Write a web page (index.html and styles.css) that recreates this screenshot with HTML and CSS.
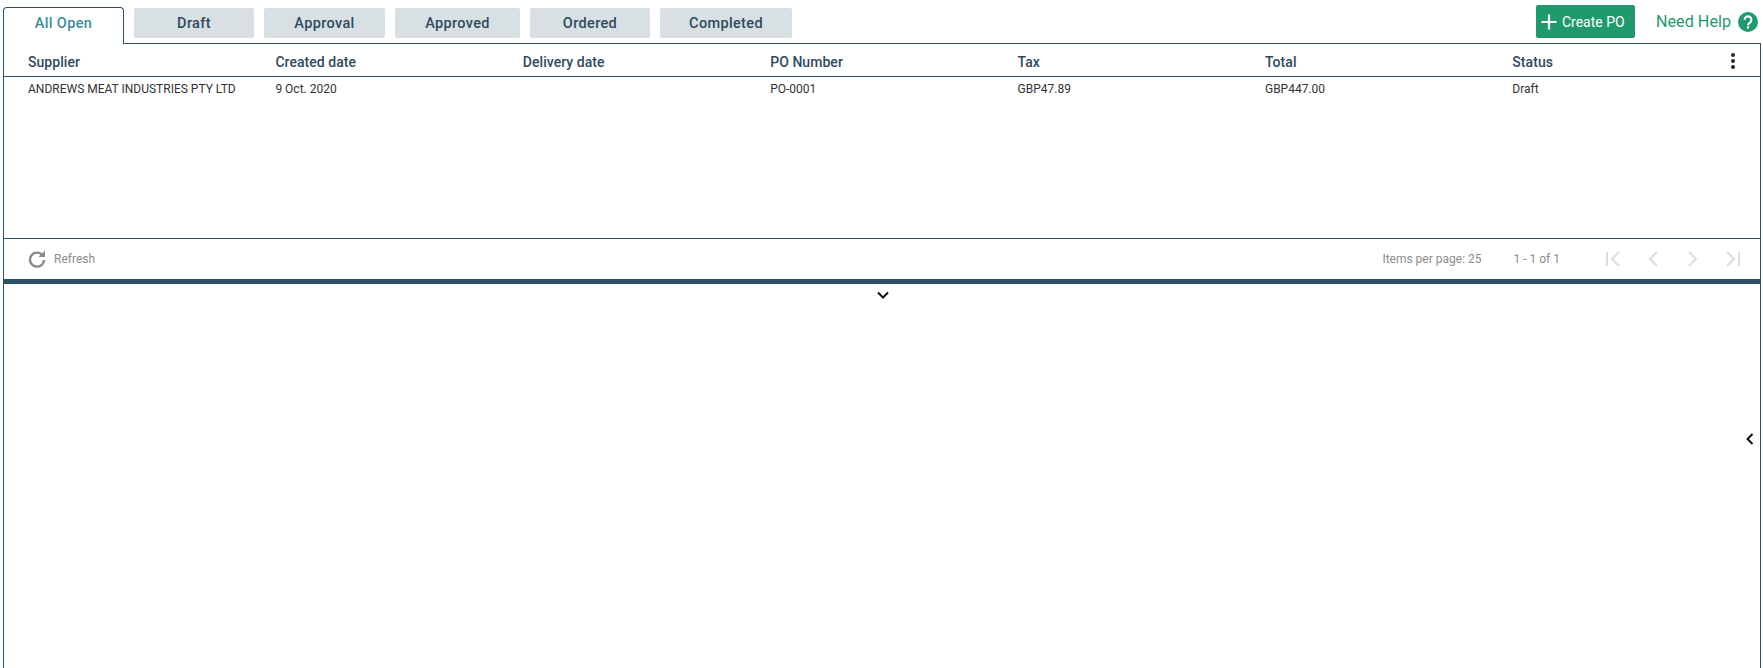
FILE: index.html
```html
<!DOCTYPE html>
<html lang="en">
<head>
<meta charset="utf-8">
<title>Purchase Orders</title>
<link rel="stylesheet" href="styles.css">
</head>
<body>
<div class="page">
  <header class="topbar">
    <nav class="tabs">
      <div class="tab active">All Open</div>
      <div class="tab t-draft">Draft</div>
      <div class="tab t-approval">Approval</div>
      <div class="tab t-approved">Approved</div>
      <div class="tab t-ordered">Ordered</div>
      <div class="tab t-completed">Completed</div>
    </nav>
    <div class="actions">
      <button class="create"><svg class="plus" viewBox="0 0 16 16" width="16" height="16"><path d="M8 .5v15M.5 8h15" stroke="#fff" stroke-width="2.200" fill="none"/></svg><span>Create PO</span></button>
      <div class="help"><span>Need Help</span><svg viewBox="0 0 20 20" width="20" height="20"><circle cx="10" cy="10" r="10" fill="#1f9a6c"/><path d="M6.600 7.800a3.400 3.400 0 1 1 5.300 2.800c-1.200.8-1.900 1.300-1.900 2.600" stroke="#fff" stroke-width="2.100" fill="none"/><rect x="8.900" y="14.300" width="2.200" height="2.200" fill="#fff"/></svg></div>
    </div>
  </header>
  <main class="panel">
    <section class="grid-wrap">
      <div class="row head">
        <div>Supplier</div><div>Created date</div><div>Delivery date</div><div>PO Number</div><div>Tax</div><div>Total</div><div>Status</div>
        <div class="menu"><i></i><i></i><i></i></div>
      </div>
      <div class="body-area">
        <div class="row data">
          <div>ANDREWS MEAT INDUSTRIES PTY LTD</div><div>9 Oct. 2020</div><div></div><div>PO-0001</div><div>GBP47.89</div><div>GBP447.00</div><div>Draft</div>
        </div>
      </div>
      <footer class="foot">
        <div class="refresh">
          <svg viewBox="0 0 18 18" width="18" height="18"><path d="M14.600 5.400A7 7 0 1 0 16 10" stroke="#8a8a8a" stroke-width="2.400" fill="none"/><path d="M10.500 7h6.500V.5z" fill="#8a8a8a"/></svg>
          <span>Refresh</span>
        </div>
        <div class="pager">
          <span class="ipp">Items per page: 25</span>
          <span class="count">1 - 1 of 1</span>
          <div class="pg-icons">
            <svg viewBox="0 0 16 16" width="16" height="16"><path d="M2 1v14M14 1 7 8l7 7" stroke="#dcdcdc" stroke-width="2" fill="none"/></svg>
            <svg viewBox="0 0 16 16" width="16" height="16"><path d="M12 1 5 8l7 7" stroke="#dcdcdc" stroke-width="2" fill="none"/></svg>
            <svg viewBox="0 0 16 16" width="16" height="16"><path d="M4 1l7 7-7 7" stroke="#dcdcdc" stroke-width="2" fill="none"/></svg>
            <svg viewBox="0 0 16 16" width="16" height="16"><path d="M14 1v14M2 1l7 7-7 7" stroke="#dcdcdc" stroke-width="2" fill="none"/></svg>
          </div>
        </div>
      </footer>
    </section>
    <div class="divider"></div>
    <section class="detail">
      <svg class="chev-down" viewBox="0 0 12 8" width="12" height="8"><path d="M1 1.500 6 6.500l5-5" stroke="#111" stroke-width="2" fill="none"/></svg>
      <svg class="chev-left" viewBox="0 0 8 12" width="8" height="12"><path d="M6.500 1 1.500 6l5 5" stroke="#111" stroke-width="2" fill="none"/></svg>
    </section>
  </main>
</div>
</body>
</html>
```
FILE: styles.css
```css
html, body {
  margin: 0;
  padding: 0;
  background: #fff;
}
.page {
  width: 1763px;
  height: 668px;
  overflow: hidden;
  display: flex;
  flex-direction: column;
  padding: 0 2px 0 3px;
  box-sizing: border-box;
  font-family: Roboto, "Liberation Sans", sans-serif;
  color: #2f4a5f;
}
.topbar {
  height: 44px;
  flex: none;
  display: flex;
  justify-content: space-between;
  position: relative;
  z-index: 1;
}
.tabs {
  display: flex;
  align-items: flex-start;
  gap: 10px;
  padding-top: 8px;
}
.tab {
  height: 30px;
  line-height: 31px;
  text-align: center;
  background: #d8e0e3;
  border-radius: 2px;
  font-size: 14.500px;
  font-weight: 500;
  letter-spacing: .35px;
  color: #2f4a5f;
}
.tab.active {
  width: 121px;
  height: 37px;
  margin-top: -1px;
  line-height: 31px;
  background: #fff;
  border: 1px solid #2c5068;
  border-bottom: 0;
  border-radius: 4px 4px 0 0;
  box-sizing: border-box;
  color: #3b8d9c;
}
.t-draft { width: 120px; }
.t-approval { width: 121px; }
.t-approved { width: 125px; }
.t-ordered { width: 120px; }
.t-completed { width: 132px; }
.actions {
  display: flex;
  align-items: flex-start;
  padding-top: 5px;
}
.create {
  width: 99px;
  height: 33px;
  padding: 0 0 0 5px;
  border: 0;
  border-radius: 2px;
  background: #1f9a6c;
  color: #fff;
  display: flex;
  align-items: center;
  gap: 5px;
  font-family: inherit;
  font-size: 14px;
}
.help {
  display: flex;
  align-items: center;
  gap: 7px;
  margin-left: 21px;
  margin-right: 3px;
  height: 33px;
  color: #1f9a6c;
  font-size: 16.200px;
}
.panel {
  flex: 1;
  display: flex;
  flex-direction: column;
  min-height: 0;
  margin-top: -1px;
  border: 1px solid #2c5068;
  border-bottom: 0;
  border-top: 0;
}
.grid-wrap {
  flex: none;
  display: flex;
  flex-direction: column;
}
.row {
  display: grid;
  grid-template-columns: repeat(7, 247.400px);
  padding-left: 24px;
}
.head {
  position: relative;
  height: 29px;
  padding-top: 3px;
  align-items: center;
  border-top: 1px solid #2c5068;
  border-bottom: 1px solid #2c5068;
  font-size: 14px;
  font-weight: 500;
  letter-spacing: .05px;
  color: #2f4a5f;
}
.menu {
  position: absolute;
  right: 25px;
  top: 9px;
  display: flex;
  flex-direction: column;
  gap: 2px;
}
.menu i {
  display: block;
  width: 4px;
  height: 4px;
  border-radius: 50%;
  background: #1d2b36;
}
.body-area {
  height: 161px;
  border-bottom: 1px solid #2c5068;
}
.data {
  height: 24px;
  align-items: center;
  font-size: 12px;
  color: #333;
}
.foot {
  height: 40px;
  display: flex;
  justify-content: space-between;
  align-items: center;
  color: #8c8c8c;
  font-size: 12px;
}
.refresh {
  display: flex;
  align-items: center;
  gap: 8px;
  padding-left: 24px;
}
.pager {
  display: flex;
  align-items: center;
}
.ipp { margin-right: 32px; }
.count { margin-right: 45px; }
.pg-icons {
  display: flex;
  gap: 24px;
  padding-right: 19px;
}
.divider {
  height: 5px;
  flex: none;
  background: #2c5068;
}
.detail {
  flex: 1;
  position: relative;
}
.chev-down {
  position: absolute;
  left: 873px;
  top: 7px;
}
.chev-left {
  position: absolute;
  right: 6px;
  top: 149px;
}
```
